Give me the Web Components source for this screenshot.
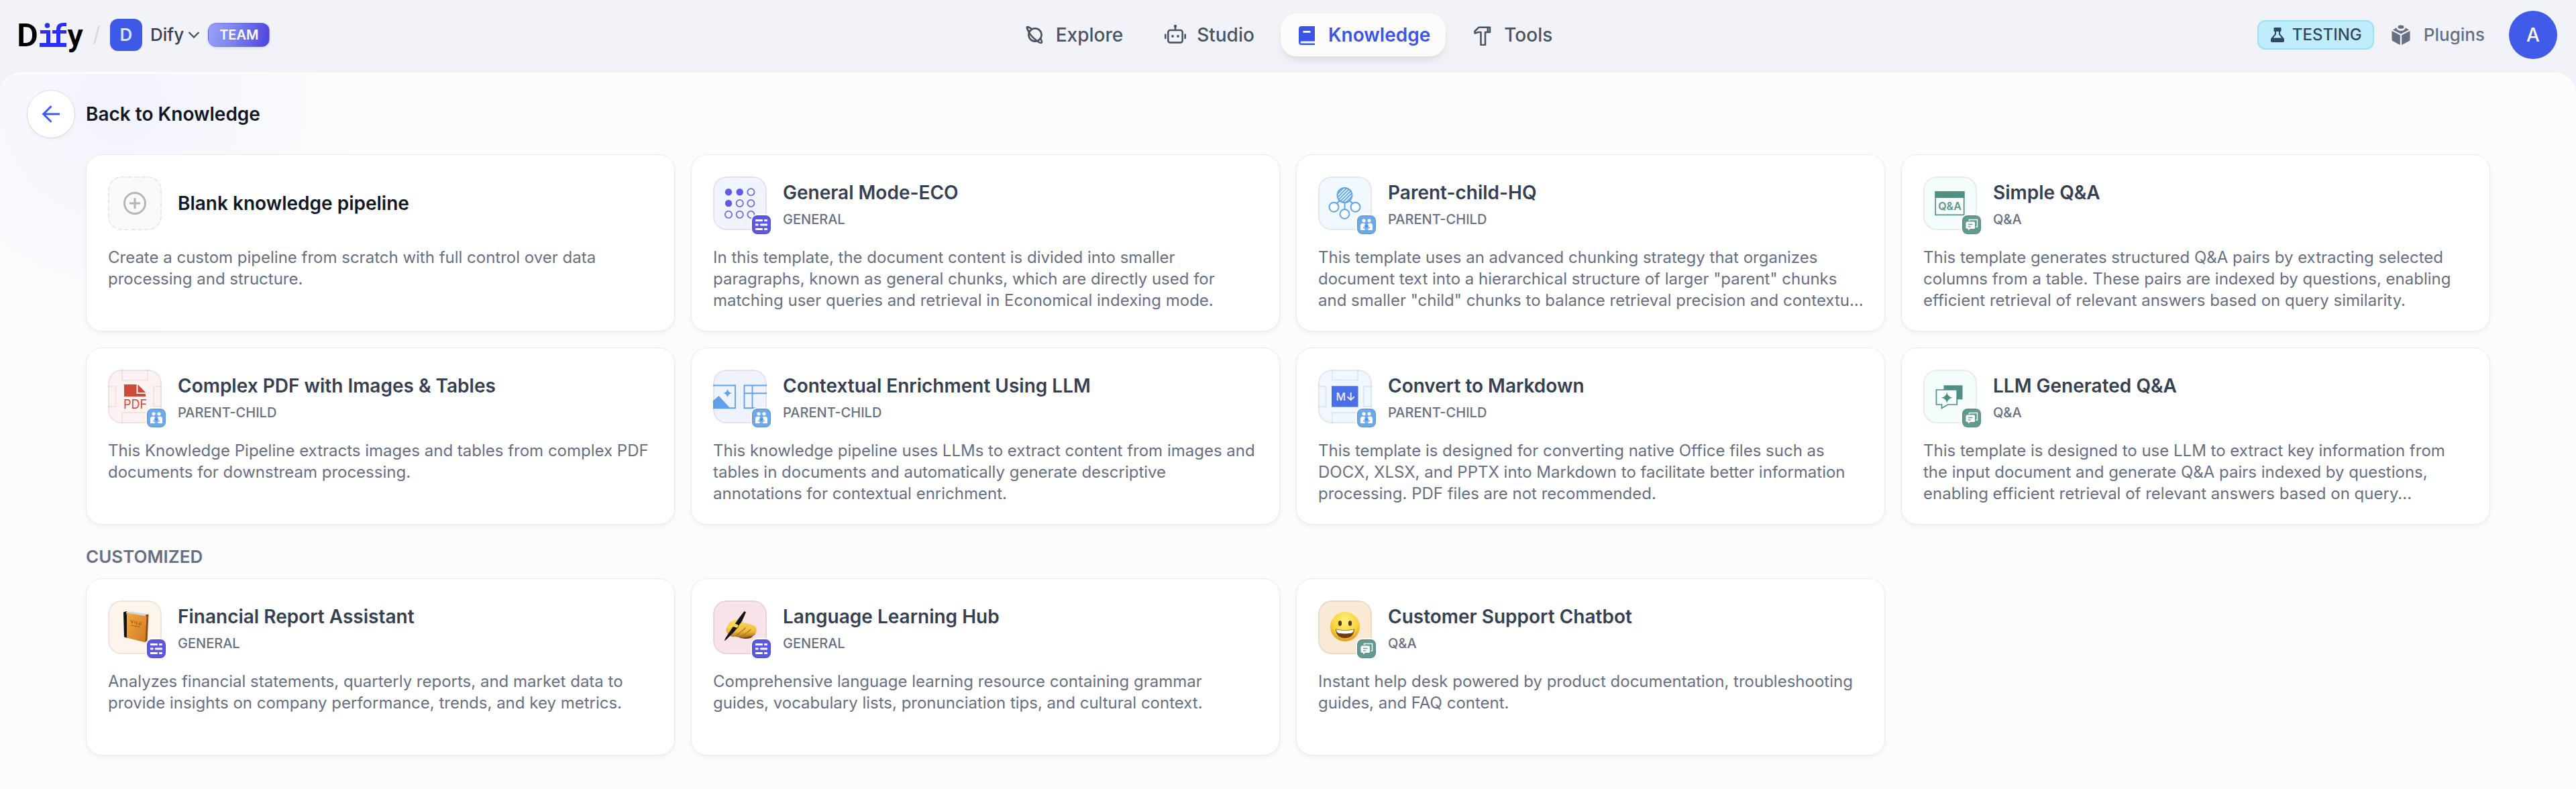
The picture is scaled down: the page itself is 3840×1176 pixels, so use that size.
<!DOCTYPE html>
<html lang="en">
<head>
<meta charset="utf-8">
<title>Knowledge pipelines</title>
<style>
  html { background: #f2f3f8; }
  body { margin: 0; min-height: 100vh; display: flex; flex-direction: column; font-family: Inter, "Liberation Sans", sans-serif; color: #354052; }
</style>
</head>
<body>
<app-header></app-header>
<page-panel>
  <back-bar>Back to Knowledge</back-bar>
  <card-grid>
    <pipeline-card icon="blank">
      <span slot="title">Blank knowledge pipeline</span>
      Create a custom pipeline from scratch with full control over data<br>processing and structure.
    </pipeline-card>
    <pipeline-card icon="general" mode="general">
      <span slot="title">General Mode-ECO</span><span slot="type">GENERAL</span>
      In this template, the document content is divided into smaller<br>paragraphs, known as general chunks, which are directly used for<br>matching user queries and retrieval in Economical indexing mode.
    </pipeline-card>
    <pipeline-card icon="parent" mode="parent">
      <span slot="title">Parent-child-HQ</span><span slot="type">PARENT-CHILD</span>
      This template uses an advanced chunking strategy that organizes<br>document text into a hierarchical structure of larger "parent" chunks<br>and smaller "child" chunks to balance retrieval precision and contextu...
    </pipeline-card>
    <pipeline-card icon="qa" mode="qa">
      <span slot="title">Simple Q&amp;A</span><span slot="type">Q&amp;A</span>
      This template generates structured Q&amp;A pairs by extracting selected<br>columns from a table. These pairs are indexed by questions, enabling<br>efficient retrieval of relevant answers based on query similarity.
    </pipeline-card>
    <pipeline-card icon="pdf" mode="parent">
      <span slot="title">Complex PDF with Images &amp; Tables</span><span slot="type">PARENT-CHILD</span>
      This Knowledge Pipeline extracts images and tables from complex PDF<br>documents for downstream processing.
    </pipeline-card>
    <pipeline-card icon="contextual" mode="parent">
      <span slot="title">Contextual Enrichment Using LLM</span><span slot="type">PARENT-CHILD</span>
      This knowledge pipeline uses LLMs to extract content from images and<br>tables in documents and automatically generate descriptive<br>annotations for contextual enrichment.
    </pipeline-card>
    <pipeline-card icon="markdown" mode="parent">
      <span slot="title">Convert to Markdown</span><span slot="type">PARENT-CHILD</span>
      This template is designed for converting native Office files such as<br>DOCX, XLSX, and PPTX into Markdown to facilitate better information<br>processing. PDF files are not recommended.
    </pipeline-card>
    <pipeline-card icon="llm" mode="qa">
      <span slot="title">LLM Generated Q&amp;A</span><span slot="type">Q&amp;A</span>
      This template is designed to use LLM to extract key information from<br>the input document and generate Q&amp;A pairs indexed by questions,<br>enabling efficient retrieval of relevant answers based on query...
    </pipeline-card>
  </card-grid>
  <section-title>CUSTOMIZED</section-title>
  <card-grid>
    <pipeline-card icon="book" mode="general">
      <span slot="title">Financial Report Assistant</span><span slot="type">GENERAL</span>
      Analyzes financial statements, quarterly reports, and market data to<br>provide insights on company performance, trends, and key metrics.
    </pipeline-card>
    <pipeline-card icon="hand" mode="general">
      <span slot="title">Language Learning Hub</span><span slot="type">GENERAL</span>
      Comprehensive language learning resource containing grammar<br>guides, vocabulary lists, pronunciation tips, and cultural context.
    </pipeline-card>
    <pipeline-card icon="face" mode="qa">
      <span slot="title">Customer Support Chatbot</span><span slot="type">Q&amp;A</span>
      Instant help desk powered by product documentation, troubleshooting<br>guides, and FAQ content.
    </pipeline-card>
  </card-grid>
</page-panel>

<script>
const define = (name, html) => customElements.define(name, class extends HTMLElement {
  constructor() {
    super();
    this.attachShadow({ mode: 'open' }).innerHTML = html;
  }
});

/* ---------- header ---------- */
const NAV_ICONS = {
  explore: `<g fill="none" stroke="currentColor" stroke-width="2.6" stroke-linecap="round"><circle cx="17" cy="16" r="9.6"/><path d="M8.6 11.4C4.8 7.200 4 4.600 5.400 4.200C6.600 3.800 9 5 12 7.400"/><path d="M5.400 4.200C4.600 8 9 15.500 14.500 20.500C20 25.500 25 28.600 26.600 27.600C28 26.400 26.500 23.500 24.600 20.900"/></g>`,
  studio: `<g fill="none" stroke="currentColor" stroke-width="2.6" stroke-linecap="round" stroke-linejoin="round"><rect x="5.300" y="9" width="21.400" height="18.400" rx="3"/><path d="M16 9V3.500M1.300 15.500V21M30.700 15.500V21"/></g><circle cx="16" cy="3" r="2.200" fill="currentColor"/><circle cx="12" cy="18" r="1.900" fill="currentColor"/><circle cx="20" cy="18" r="1.900" fill="currentColor"/>`,
  knowledge: `<path fill="currentColor" fill-rule="evenodd" d="M8 3H28V31H8A4 4 0 0 1 4 27V7A4 4 0 0 1 8 3ZM10.500 10V12.800H21.500V10ZM8 25.400A1.500 1.500 0 0 0 8 28.400H28V25.400Z"/>`,
  tools: `<path fill="none" stroke="currentColor" stroke-width="2.600" stroke-linejoin="round" d="M10.500 4.800H27V12H20V31H13.500V12H9.500L4.500 13.500V10.500ZM23.800 4.800V12"/>`
};
customElements.define('nav-item', class extends HTMLElement {
  constructor() {
    super();
    this.attachShadow({ mode: 'open' }).innerHTML = `
      <style>
        :host { display: block; }
        a { display: flex; align-items: center; gap: 16px; height: 64px; padding: 0 23px; border-radius: 24px; color: #495464; font-size: 28px; line-height: 40px; font-weight: 500; text-decoration: none; }
        :host([active]) a { background: #fcfcfd; color: #3b55e6; font-weight: 600; box-shadow: 0 8px 16px -4px rgba(16,24,40,.1), 0 2px 6px -1px rgba(16,24,40,.04); }
        svg { width: 32px; height: 32px; flex: none; }
      </style>
      <a href="#"><svg viewBox="0 0 32 32" aria-hidden="true">${NAV_ICONS[this.getAttribute('icon')]}</svg><slot></slot></a>`;
  }
});

define('brand-logo', `
  <style>:host { display: block; } svg { display: block; width: 96px; height: 52px; overflow: visible; }</style>
  <svg viewBox="0 0 96 52" role="img" aria-label="Dify">
    <text x="-3" y="43" font-family="Roboto, sans-serif" font-weight="600" font-size="49" fill="#000">D</text>
    <g fill="#2a2dff">
      <rect x="31" y="38" width="40" height="6"/>
      <rect x="32" y="19" width="15" height="5"/><rect x="41" y="19" width="6" height="20"/>
      <circle cx="42.500" cy="12" r="3.800"/>
      <rect x="50" y="19" width="21" height="5"/>
      <path d="M56 39V18Q56 8 66 8H71V13H67Q62 13 62 18V39Z"/>
    </g>
    <text x="72.500" y="43" font-family="Roboto, sans-serif" font-weight="600" font-size="47" fill="#000">y</text>
  </svg>`);

define('app-header', `
  <style>
    :host { display: block; }
    header { display: grid; grid-template-columns: 1fr auto 1fr; align-items: center; height: 108px; padding: 0 28px; box-sizing: border-box; }
    .left, .right, nav { display: flex; align-items: center; padding-bottom: 4px; }
    .slash { width: 12px; height: 30px; margin: 0 14px; }
    button { display: flex; align-items: center; border: 0; padding: 0; background: none; font: inherit; }
    .tile { width: 48px; height: 48px; line-height: 48px; border-radius: 12px; background: #3e59e6; color: #dce1fb; font-size: 26px; font-weight: 600; text-align: center; margin-right: 12px; }
    .name { font-size: 26px; line-height: 40px; font-weight: 500; color: #354052; }
    .chev { width: 18px; height: 12px; margin: 0 12px 0 6px; }
    .team { height: 36px; line-height: 34px; box-sizing: border-box; border: 1px solid rgba(110,115,235,.5); padding: 0 16px; border-radius: 12px; font-size: 20px; font-weight: 600; color: #fff; background: linear-gradient(100deg, #98a2f5 0%, #7b7fee 45%, #5048e0 95%); box-shadow: 0 2px 4px rgba(16,24,40,.08); }
    nav { gap: 16px; }
    .right { justify-content: flex-end; }
    .testing { display: flex; align-items: center; gap: 12px; height: 44px; box-sizing: border-box; border: 2px solid #9be0f6; border-radius: 12px; background: #c0edfb; color: #2e4a61; font-size: 24px; line-height: 32px; font-weight: 500; padding: 0 16px 0 18px; }
    .testing svg { width: 20px; height: 22px; }
    .plugins { display: flex; align-items: center; gap: 20px; margin: 0 36px 0 26px; font-size: 26px; line-height: 40px; font-weight: 500; color: #676f83; text-decoration: none; }
    .plugins svg { width: 28px; height: 30px; }
    .avatar { width: 72px; height: 72px; border-radius: 50%; background: #405be8; color: #fff; font-size: 28px; font-weight: 500; justify-content: center; }
  </style>
  <header>
    <div class="left">
      <brand-logo></brand-logo>
      <svg class="slash" viewBox="0 0 12 30"><path d="M2.500 28.500L9.500 1.500" stroke="#d4d7de" stroke-width="2.500"/></svg>
      <button type="button"><span class="tile">D</span><span class="name">Dify</span>
      <svg class="chev" viewBox="0 0 18 12"><path d="M1.500 2L9 9.500L16.500 2" fill="none" stroke="#495464" stroke-width="2.400"/></svg></button>
      <span class="team">TEAM</span>
    </div>
    <nav>
      <nav-item icon="explore">Explore</nav-item>
      <nav-item icon="studio">Studio</nav-item>
      <nav-item icon="knowledge" active>Knowledge</nav-item>
      <nav-item icon="tools">Tools</nav-item>
    </nav>
    <div class="right">
      <span class="testing"><svg viewBox="0 0 20 22"><path fill="currentColor" fill-rule="evenodd" d="M5.500 0H14.500A1 1 0 0 1 15.500 1V5A1 1 0 0 1 14.500 6H14V9.500L19.400 16Q20 17 20 18V20A2 2 0 0 1 18 22H2A2 2 0 0 1 0 20V18Q0 17 .6 16L6 9.500V6H5.500A1 1 0 0 1 4.500 5V1A1 1 0 0 1 5.500 0ZM8 6V10.200L3.800 15.500H16.200L12 10.200V6Z"/></svg>TESTING</span>
      <a class="plugins" href="#"><svg viewBox="0 0 28 30"><g fill="currentColor"><path d="M.5 9L12.800 15.600V30L2 24.200Q.5 23.400.5 21.800ZM27.500 9L15.200 15.600V30L26 24.200Q27.500 23.400 27.500 21.800Z"/><path d="M2 7.400L7 4.500Q9 9 14 9T21 4.500L26 7.400L14 13.600Z"/><ellipse cx="14" cy="3.200" rx="4.500" ry="2.600"/></g></svg>Plugins</a>
      <button type="button" class="avatar">A</button>
    </div>
  </header>`);

/* ---------- page frame ---------- */
define('page-panel', `
  <style>
    :host { display: flex; flex: 1; flex-direction: column; box-sizing: border-box; padding: 24px 128px 50px; border-top: 2px solid #fff; border-radius: 32px 32px 0 0;
      background: radial-gradient(circle at 180px 40px, #f4f4fe 0, #f4f4fe 50px, #f8f9fd 200px, rgba(252,252,253,0) 350px), #fcfcfd; }
  </style><slot></slot>`);

define('back-bar', `
  <style>
    :host { display: block; margin: 0 0 24px -88px; }
    div { display: flex; align-items: center; gap: 16px; }
    a { display: flex; align-items: center; justify-content: center; width: 72px; height: 72px; box-sizing: border-box; border: 1px solid #dcdde2; border-radius: 50%; background: #fff; box-shadow: 0 2px 4px rgba(16,24,40,.06); }
    svg { width: 28px; height: 28px; }
    h1 { margin: 0; font-size: 28px; line-height: 40px; font-weight: 600; color: #101828; }
  </style>
  <div><a href="#" aria-label="Back"><svg viewBox="0 0 28 28"><path d="M27 14H3M14.500 2.200L2.700 14L14.500 25.800" fill="none" stroke="#3f5ae8" stroke-width="3"/></svg></a>
  <h1><slot></slot></h1></div>`);

define('section-title', `
  <style>
    :host { display: block; padding: 28px 0 12px; }
    h2 { margin: 0; font-size: 26px; line-height: 40px; font-weight: 600; color: #676f83; }
  </style><h2><slot></slot></h2>`);

define('card-grid', `
  <style>:host { display: grid; grid-template-columns: repeat(4, minmax(0, 1fr)); gap: 24px; }</style><slot></slot>`);

/* ---------- template artwork, 80 x 80 ---------- */
const frames = c => `<g fill="none" stroke="${c}" stroke-width="1.700"><rect x="21" y="-2" width="38" height="17.500"/><rect x="-2" y="25" width="13.500" height="30"/><rect x="68" y="25" width="14" height="30"/><rect x="21" y="64" width="38" height="18"/></g>`;
const dots = () => {
  let s = '';
  [23.300, 40, 56.700].forEach((y, r) => [23, 39.700, 56.400].forEach((x, c) => {
    s += r + c < 2 ? `<circle cx="${x}" cy="${y}" r="5.200" fill="#5f5de4"/>` : `<circle cx="${x}" cy="${y}" r="5.100" fill="#f6f8ff" stroke="#6a69e6" stroke-width="1.800"/>`;
  }));
  return s;
};
const ART = {
  blank: ['#f9fafb', `<g fill="none" stroke="#b4b5bb" stroke-width="3"><circle cx="40" cy="40" r="15.500"/><path d="M40 32V48M32 40H48"/></g>`],
  general: ['#eff4ff', dots()],
  parent: ['#f2f8ff', `<defs><clipPath id="c"><circle cx="39.500" cy="28" r="10.500"/></clipPath></defs>
    <g stroke="#5ea2e9" stroke-width="1.900" fill="none"><path d="M32 36L27 41M47 36L52 41M39.500 39V49"/><circle cx="39.500" cy="28" r="11" fill="#e8f3ff"/>
    <path clip-path="url(#c)" stroke-width="1.700" d="M24 31L44 11M24 36L49 11M24 41L54 11M27 43L59 11M32 43L64 11M37 43L69 11M42 43L74 11"/>
    <circle cx="23.500" cy="45.700" r="7" fill="#f8fcff"/><circle cx="55.500" cy="45.700" r="7" fill="#f8fcff"/><circle cx="39.500" cy="56" r="7" fill="#f8fcff"/></g>`],
  qa: ['#f4fdfb', `<rect x="18.200" y="22.800" width="42.500" height="34.500" fill="#f8fffd" stroke="#509083" stroke-width="1.700"/><rect x="17.500" y="22" width="44" height="10" fill="#509083"/><text x="39.500" y="50" text-anchor="middle" font-size="16" font-weight="600" fill="#5a988b">Q&amp;A</text>`],
  pdf: ['#fcf2f1', frames('#f6dedd') + `<path fill="#cd4b39" d="M24 22H42.500V36H56V40H24ZM44.500 22L56 34H44.500Z"/><text x="40.500" y="57.500" text-anchor="middle" font-size="18" font-weight="400" fill="#cd4b39">PDF</text>`],
  contextual: ['#eff3ff', `<g fill="none" stroke="#5fa2e9" stroke-width="1.900"><path d="M-2 23.500H33V57.200H-2"/><path d="M82 23.500H46.500V57.200H82M58.500 23.500V57.200M46.500 35.200H82"/></g><path fill="#5fa2e9" d="M-2 48L8.500 39L26 58H-2ZM21.500 28.500Q22.500 34 28 35Q22.500 36 21.500 41.500Q20.500 36 15 35Q20.500 34 21.500 28.500Z"/>`],
  markdown: ['#f0f7ff', frames('#d8e5fb') + `<rect x="20" y="24.300" width="39.500" height="31.300" fill="#4a6fe9"/><text x="33.700" y="45.700" text-anchor="middle" font-size="16" font-weight="500" fill="#eef3ff">M</text><path d="M48.700 34V45M43.500 40.300L48.700 45.300L53.900 40.300" fill="none" stroke="#eef3ff" stroke-width="1.900"/>`],
  llm: ['#f4fdfb', `<rect x="30.500" y="23.300" width="28" height="21" fill="#509083"/><path d="M19.500 30H50.200V52H36.500L27.500 57.500V52H19.500Z" fill="#f6fffd" stroke="#509083" stroke-width="1.700"/><path fill="#509083" d="M35.300 33.500Q36.500 40.500 43.500 41.700Q36.500 42.900 35.300 50Q34.100 42.900 27 41.700Q34.100 40.500 35.300 33.500Z"/>`],
  book: ['#fdf4ec', `<defs><linearGradient id="b" x1="0" y1="0" x2="1" y2="1"><stop offset="0" stop-color="#f2a93c"/><stop offset="1" stop-color="#cf7a22"/></linearGradient></defs>
    <path d="M23 17.500L28 16L30 19V56L24 54.500Z" fill="#17120f"/><path d="M27 17L34 16.500L59 20.500L58 24L28 22Z" fill="#cfd8e2"/><path d="M56 21.500L60.500 20.500L58.500 61L54 62Z" fill="#8d4c18"/>
    <path d="M28 18.500L57.500 23.500L55.500 62.500L28 55.500Z" fill="url(#b)"/>
    <path d="M33.500 29L36 33.500L37.500 29.500M40 30.500V34.500M42.500 31V35H44.500M49 32V37M47 32L46.500 35.500L49.500 36M34 37L48 39.500" fill="none" stroke="#a35f1a" stroke-width="1.100"/>`],
  hand: ['#f8e4e8', `<defs><linearGradient id="h" x1="0" y1="0" x2="0" y2="1"><stop offset="0" stop-color="#f9dc5c"/><stop offset=".65" stop-color="#eebb3e"/><stop offset="1" stop-color="#a9651a"/></linearGradient></defs>
    <path d="M34 52Q42 59 56 56L63 50L40 46Z" fill="#6f3c14"/>
    <path d="M22 38C24 31 30 28.500 36 29L47 33C54 36 64 36 64.500 42C66 49 61 53 54 53.500C48 56 40 56 33 53.500C28 55 22 52 21 48C18 46 19 41 22 38Z" fill="url(#h)"/>
    <path d="M27 49C31 44 35 43 38 39M34 53C38 48 44 46 48 41M43 54C47 49 52 48 56 43" fill="none" stroke="#b97a1e" stroke-width="1.500" stroke-linecap="round"/>
    <path d="M46.500 16L49 17.500L43 31L32 46L20 58L16.500 60.500L18.500 56L27 43L38 27Z" fill="#141414"/>
    <path d="M24 39Q29 35 35 38" stroke="#f6d453" stroke-width="5" stroke-linecap="round" fill="none"/>`],
  face: ['#faead5', `<defs><radialGradient id="f" cx=".5" cy=".3" r=".75"><stop offset="0" stop-color="#fff27a"/><stop offset=".6" stop-color="#f9d23c"/><stop offset="1" stop-color="#dd8d14"/></radialGradient></defs>
    <circle cx="40" cy="39" r="22" fill="url(#f)"/><ellipse cx="32.500" cy="34" rx="2.600" ry="4" fill="#5c3a12"/><ellipse cx="47.500" cy="34" rx="2.600" ry="4" fill="#5c3a12"/>
    <path d="M26 42.500Q40 46 54 42.500Q53 56 40 56T26 42.500Z" fill="#6b3c12"/><path d="M27 43.300Q40 46.300 53 43.300Q52.500 48.500 49 48.800Q40 50 31 48.800Q27.500 48.500 27 43.300Z" fill="#fff"/>`]
};
const BADGES = {
  general: ['#5b57e4', `<g fill="#fff"><rect x="5" y="6" width="11" height="3" rx=".8"/><rect x="18" y="6" width="5" height="3" rx=".8"/><rect x="5" y="12.500" width="4.500" height="3" rx=".8"/><rect x="12" y="12.500" width="11" height="3" rx=".8"/><rect x="5" y="19" width="11" height="3" rx=".8"/><rect x="18" y="19" width="5" height="3" rx=".8"/></g>`],
  parent: ['#6ca8ea', `<g fill="#fff"><circle cx="10" cy="7.800" r="2.600"/><circle cx="18" cy="7.800" r="2.600"/><path d="M5 22V15.500Q5 11.800 8.500 11.800H9.500Q11.500 11.800 12.300 13.500A3.200 3.200 0 1 0 15.700 13.500Q16.500 11.800 18.500 11.800H19.500Q23 11.800 23 15.500V22H16.500V20.500H11.500V22Z"/></g><circle cx="14" cy="16.200" r="2" fill="#4f93dc"/><path d="M9 17.500Q14 22.500 19 17.500" fill="none" stroke="#6ca8ea" stroke-width="1.300"/>`],
  qa: ['#639a8e', `<path d="M10.500 8.500V6.500H22.500V17H20.500" fill="none" stroke="#fff" stroke-width="1.500"/><path d="M7.500 9.500H17.500Q19 9.500 19 11V18.500Q19 20 17.500 20H12L9 22.500V20H7.500Q5.500 20 5.500 18V11.500Q5.500 9.500 7.500 9.500Z" fill="#fff"/><path d="M9 13.500H15.500M9 16.800H13" stroke="#639a8e" stroke-width="1.300"/>`]
};

customElements.define('template-icon', class extends HTMLElement {
  connectedCallback() {
    const kind = this.getAttribute('kind'), mode = this.getAttribute('mode');
    const [bg, art] = ART[kind], badge = BADGES[mode];
    this.attachShadow({ mode: 'open' }).innerHTML = `
      <style>
        :host { display: block; position: relative; width: 80px; height: 80px; flex: none; }
        .tile { width: 80px; height: 80px; border-radius: 20px; overflow: hidden; background: ${bg}; position: relative; }
        .tile::after { content: ""; position: absolute; inset: 0; border-radius: 20px; border: 2px ${kind === 'blank' ? 'dashed #e6e7ea' : 'solid rgba(16,24,40,.07)'}; }
        svg { display: block; width: 100%; height: 100%; }
        .badge { position: absolute; right: -8px; bottom: -8px; width: 32px; height: 32px; box-sizing: border-box; border: 2px solid #fff; border-radius: 10px; }
        .badge svg { border-radius: 8px; background: ${badge ? badge[0] : 'none'}; }
      </style>
      <div class="tile"><svg viewBox="0 0 80 80" aria-hidden="true">${art}</svg></div>
      ${badge ? `<div class="badge"><svg viewBox="0 0 28 28" aria-hidden="true">${badge[1]}<rect x=".5" y=".5" width="27" height="27" rx="7.500" fill="none" stroke="rgba(16,24,40,.14)"/></svg></div>` : ''}`;
  }
});

customElements.define('pipeline-card', class extends HTMLElement {
  connectedCallback() {
    const mode = this.getAttribute('mode') || '';
    this.attachShadow({ mode: 'open' }).innerHTML = `
      <style>
        :host { display: block; }
        article { height: 264px; box-sizing: border-box; padding: 32px; border: 1px solid #eaebef; border-radius: 24px; background: #fff; box-shadow: 0 3px 6px rgba(16,24,40,.05); }
        .head { display: flex; align-items: center; gap: 24px; margin-bottom: 25px; }
        .names { padding-top: ${mode ? 4 : 0}px; }
        h3 { margin: 0; font-size: 28px; line-height: 40px; font-weight: 600; color: ${mode ? '#354052' : '#101828'}; }
        .type { margin-top: 4px; font-size: 20px; line-height: 32px; font-weight: 500; color: #676f83; }
        p { margin: 0; font-size: 24px; line-height: 32px; color: #676f83; white-space: nowrap; }
      </style>
      <article>
        <div class="head">
          <template-icon kind="${this.getAttribute('icon')}" mode="${mode}"></template-icon>
          <div class="names"><h3><slot name="title"></slot></h3>${mode ? '<div class="type"><slot name="type"></slot></div>' : ''}</div>
        </div>
        <p><slot></slot></p>
      </article>`;
  }
});
</script>
</body>
</html>
